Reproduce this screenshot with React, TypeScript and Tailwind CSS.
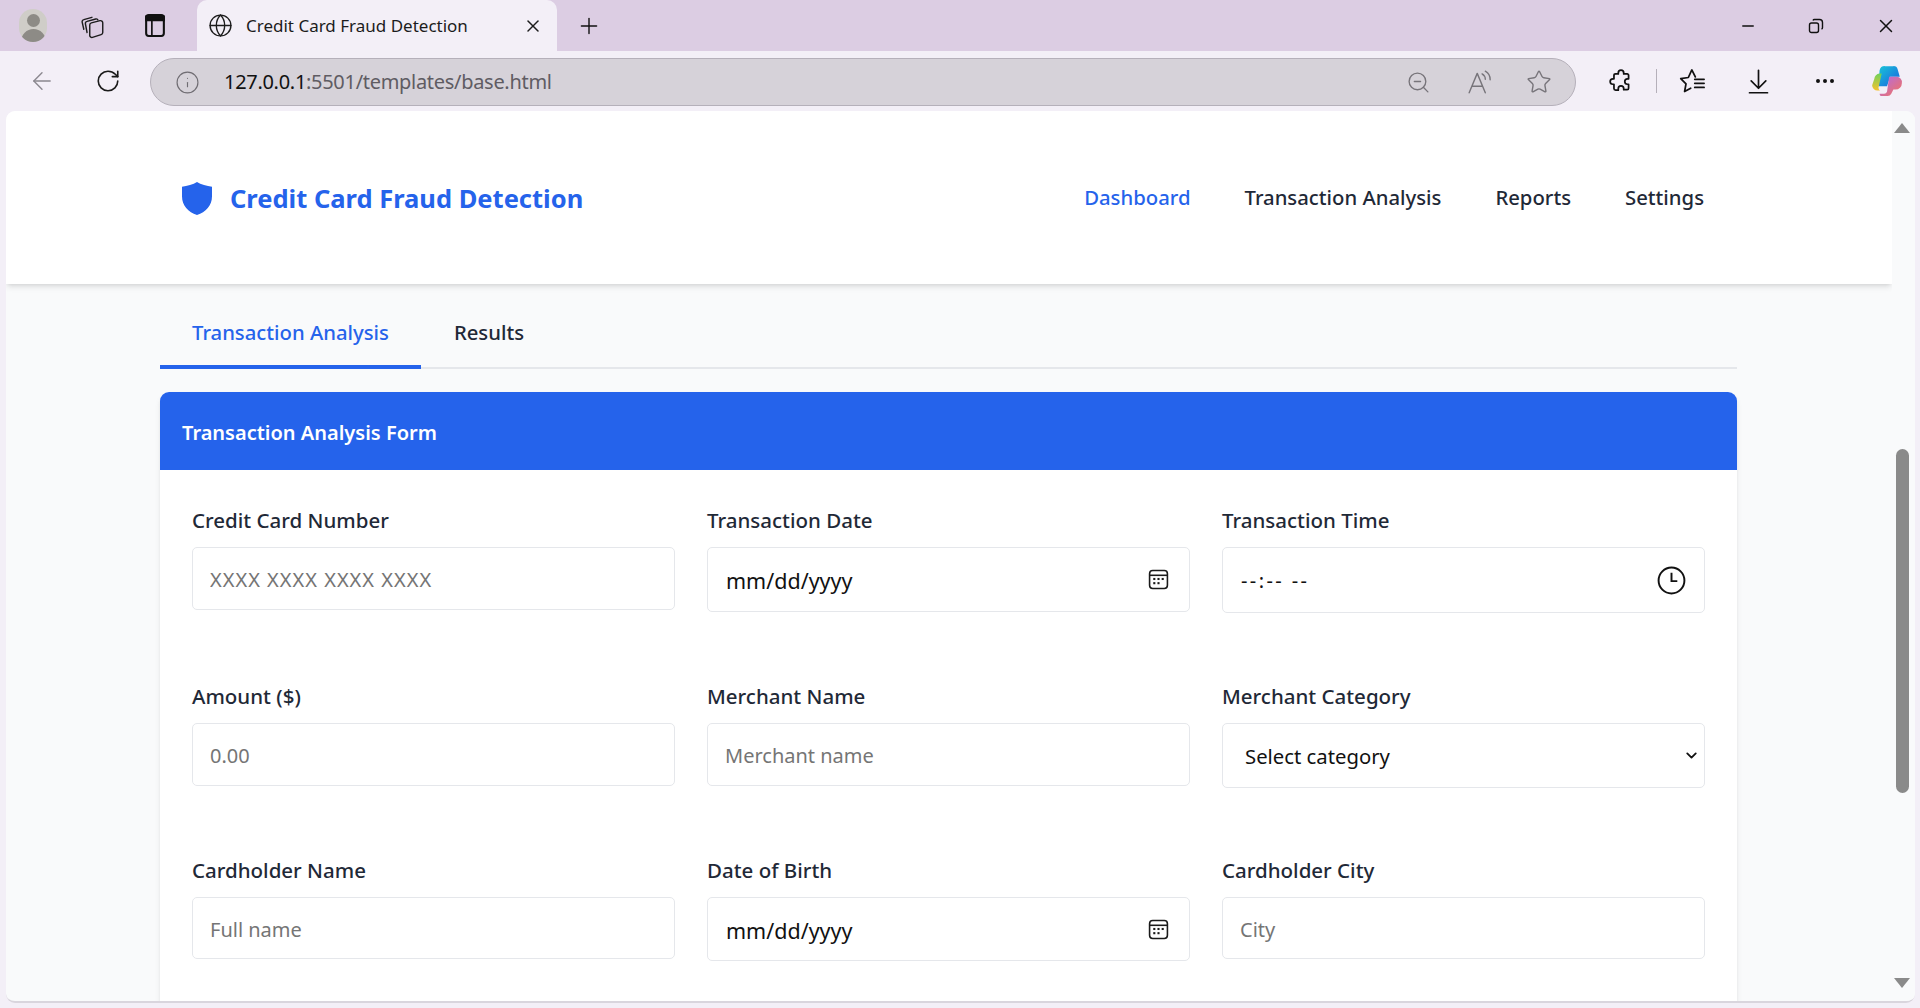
import React from 'react';
import { ArrowLeft, RotateCw, Info, ZoomOut, Star, MoreHorizontal, Globe, X, Plus, Minus, ChevronDown } from 'lucide-react';

const Shield = () => (
  <svg viewBox="0 0 24 28" preserveAspectRatio="none" className="w-[30px] h-[33px]" fill="#2563eb">
    <path d="M12 0 C15 2 20 3.6 24 4 V12 C24 20 19 25.5 12 28 C5 25.5 0 20 0 12 V4 C4 3.6 9 2 12 0 Z" />
  </svg>
);

const TabsIcon = () => (
  <svg viewBox="0 0 24 24" className="w-[26px] h-[26px]" fill="none" stroke="#1c1c1c" strokeWidth="1.3" strokeLinejoin="round" strokeLinecap="round">
    <path d="M3.500 15 L2 8.500 a2 2 0 0 1 1.500-2.400 L11 4" />
    <path d="M6.500 18 L5 10 a2 2 0 0 1 1.500-2.300 L14.500 5.500 a2 2 0 0 1 2 .8" />
    <path d="M9 21 V11 a2 2 0 0 1 1.500-1.900 l8-2 A2 2 0 0 1 21 9 v9 a2 2 0 0 1-1.500 1.900 l-8 2.600 A2 2 0 0 1 9 21z" />
  </svg>
);

const VerticalTabs = () => (
  <svg viewBox="0 0 20 24" className="w-[22px] h-[25px]" fill="none" stroke="#111" strokeWidth="2">
    <rect x="1.5" y="2" width="17" height="20" rx="2.5" />
    <path d="M1.5 3.5 h17 v3.5 h-17z" fill="#111" />
    <path d="M7 7 V22" strokeWidth="1.6" />
  </svg>
);

const ExtensionIcon = () => (
  <svg viewBox="0 0 24 24" className="w-[26px] h-[26px]" fill="none" stroke="#111" strokeWidth="1.6" strokeLinejoin="round">
    <path d="M9.5 5.5V4.5a2.5 2.5 0 0 1 5 0v1h3.2A1.3 1.3 0 0 1 19 6.800V10h-1a2.5 2.500 0 0 0 0 5h1v3.700A1.300 1.300 0 0 1 17.700 20H14.500v-1a2.500 2.500 0 0 0-5 0v1.500H7A1.500 1.500 0 0 1 5.500 19v-4h-1a2.500 2.500 0 0 1 0-5h1V7A1.500 1.500 0 0 1 7 5.500z" />
  </svg>
);

const FavoritesIcon = () => (
  <svg viewBox="0 0 24 24" className="w-[28px] h-[28px]" fill="none" stroke="#111" strokeWidth="1.5" strokeLinejoin="round" strokeLinecap="round">
    <path d="M14 8.500 L11 2.500 L8 9 L1.500 10 L6 14.500 L4.800 21 L10 18.200" />
    <path d="M13.500 10.500h8 M13.500 14h8 M13.500 17.500h8" />
  </svg>
);

const DownloadIcon = () => (
  <svg viewBox="0 0 24 24" className="w-[27px] h-[27px]" fill="none" stroke="#111" strokeWidth="1.5" strokeLinecap="round" strokeLinejoin="round">
    <path d="M12 2v16 M5.500 11.500 12 18l6.500-6.500 M4 22h16" />
  </svg>
);

const ReadAloudIcon = () => (
  <svg viewBox="0 0 26 24" className="w-[28px] h-[26px]" fill="none" stroke="#77747a" strokeWidth="1.3" strokeLinecap="round" strokeLinejoin="round">
    <path d="M2 22 L9.500 4 L17 22 M4.800 16h9.400" />
    <path d="M14 4.500 a6 6 0 0 1 3 5 M17 2 a9 9 0 0 1 4.500 8" />
  </svg>
);

const ClockIcon = () => (
  <svg viewBox="0 0 24 24" className="w-[31px] h-[31px]" fill="none" stroke="#111" strokeWidth="1.5">
    <circle cx="12" cy="12" r="10" />
    <path d="M12 6v6.500h4.500" />
  </svg>
);

const Copilot = () => (
  <svg viewBox="0 0 32 32" className="w-[34px] h-[34px]">
    <defs>
      <linearGradient id="cpA" x1="0" y1="0" x2="1" y2="1">
        <stop offset="0" stopColor="#19c5d8" />
        <stop offset="1" stopColor="#1a5fe0" />
      </linearGradient>
      <linearGradient id="cpB" x1="0" y1="0" x2="1" y2="1">
        <stop offset="0" stopColor="#b16be8" />
        <stop offset="1" stopColor="#f5735a" />
      </linearGradient>
      <linearGradient id="cpC" x1="0" y1="0" x2="0" y2="1">
        <stop offset="0" stopColor="#6fd15a" />
        <stop offset="1" stopColor="#f6c22e" />
      </linearGradient>
    </defs>
    <path d="M9 6 a5 5 0 0 1 5-4 h8 a4 4 0 0 1 4 3 l2 7 h-9 l-3 9 H8z" fill="url(#cpA)" />
    <path d="M4 14 a6 6 0 0 1 5-5 h2 l-3 13 a3 3 0 0 0 3 3 h3 l-2 0 H7 a5 5 0 0 1-5-5z" fill="url(#cpC)" />
    <path d="M18 12 h7 a5 5 0 0 1 5 6 a6 6 0 0 1-6 6 h-2 l-2 4 a4 4 0 0 1-4 2 h-6 a3 3 0 0 1-1-2 h4 a3 3 0 0 0 3-2z" fill="url(#cpB)" />
  </svg>
);

const CalendarIcon = () => (
  <svg viewBox="0 0 20 20" className="w-[21px] h-[21px]" fill="none" stroke="#1a1a1a" strokeWidth="1.5">
    <rect x="1.5" y="1.5" width="17" height="17" rx="3" />
    <path d="M1.5 6 h17" />
    <g fill="#1a1a1a" stroke="none">
      <rect x="5" y="8.5" width="2" height="2" />
      <rect x="9" y="8.5" width="2" height="2" />
      <rect x="13" y="8.5" width="2" height="2" />
      <rect x="5" y="12.5" width="2" height="2" />
      <rect x="9" y="12.5" width="2" height="2" />
    </g>
  </svg>
);

const labelClass = 'h-[41px] text-[20.5px] font-medium text-[#1f2937] leading-[28px]';
const fieldBox = 'w-full border border-[#e5e7eb] rounded-[5px] bg-white text-[#111]';

const TextField = ({ label, placeholder, h, wide }: { label: string; placeholder: string; h: string; wide?: boolean }) => (
  <div className="flex flex-col">
    <label className={labelClass}>{label}</label>
    <input
      placeholder={placeholder}
      className={`${fieldBox} ${h} ${wide ? 'tracking-[1px]' : ''} text-[20px] px-[17px] pt-[2px] placeholder:text-[#757575] outline-none`}
    />
  </div>
);

const DateField = ({ label, h }: { label: string; h: string }) => (
  <div className="flex flex-col">
    <label className={labelClass}>{label}</label>
    <div className={`${fieldBox} ${h} pl-[18px] pr-[20px] flex items-center justify-between`}>
      <span className="text-[21.5px] pt-[4px]">mm/dd/yyyy</span>
      <CalendarIcon />
    </div>
  </div>
);

export default function App() {
  return (
    <div className="h-screen w-full overflow-hidden flex flex-col bg-[#f3eff7] font-['Noto_Sans',sans-serif] text-[#111]">
      {/* tab strip */}
      <div className="h-[51px] shrink-0 bg-[#dccde3] flex items-center">
        <div className="w-[197px] shrink-0 flex items-center pl-[19px]">
          <div className="w-[28px] h-[33px] rounded-full bg-[#cfcdc8] flex flex-col items-center overflow-hidden">
            <div className="w-[13px] h-[13px] rounded-full bg-[#8d8b86] mt-[5px]" />
            <div className="w-[25px] h-[14px] rounded-t-full bg-[#8d8b86] mt-[2px]" />
          </div>
          <div className="ml-[33px]"><TabsIcon /></div>
          <div className="ml-[38px]"><VerticalTabs /></div>
        </div>
        <div className="w-[360px] shrink-0 h-[51px] bg-[#f3eff7] rounded-t-[10px] flex items-center pl-[11px] pr-[14px] text-[#1c1c1c]">
          <Globe size={25} strokeWidth={1.3} />
          <span className="ml-[13px] text-[17px] flex-1 whitespace-nowrap">Credit Card Fraud Detection</span>
          <X size={20} strokeWidth={1.8} />
        </div>
        <div className="ml-[19px]"><Plus size={26} strokeWidth={1.3} /></div>
        <div className="ml-auto flex items-center pr-[23px] gap-[51px]">
          <Minus size={18} strokeWidth={1.8} />
          <svg viewBox="0 0 16 16" className="w-[16px] h-[16px]" fill="none" stroke="#111" strokeWidth="1.4">
            <rect x="1.5" y="5" width="9" height="9.5" rx="2" />
            <path d="M5 2.5 a1.5 1.5 0 0 1 1.5-1 h5 a3 3 0 0 1 3 3 v5 a1.5 1.5 0 0 1-1 1.5" />
          </svg>
          <X size={22} strokeWidth={1.6} />
        </div>
      </div>

      {/* toolbar */}
      <div className="h-[60px] shrink-0 flex items-center">
        <div className="w-[150px] shrink-0 flex items-center pl-[28px] gap-[39px]">
          <ArrowLeft size={28} strokeWidth={1.2} className="text-[#8b888f]" />
          <RotateCw size={26} strokeWidth={1.5} className="text-[#1a1a1a]" />
        </div>
        <div className="w-[1426px] shrink-0 h-[48px] mt-[2px] rounded-full bg-[#d6d2d9] border border-[#b5b0ba] flex items-center pl-[24px] pr-[23px]">
          <Info size={25} strokeWidth={1.1} className="text-[#6f6c72]" />
          <span className="ml-[24px] text-[20px] tracking-[-0.3px]">
            <span className="text-[#111]">127.0.0.1</span>
            <span className="text-[#5f5c63]">:5501/templates/base.html</span>
          </span>
          <div className="ml-auto flex items-center">
            <ZoomOut size={25} strokeWidth={1.3} className="text-[#77747a]" />
            <div className="ml-[36px]"><ReadAloudIcon /></div>
            <Star size={26} strokeWidth={1.3} className="ml-[31px] text-[#77747a]" />
          </div>
        </div>
        <div className="flex-1 flex items-center pl-[32px] text-[#111]">
          <ExtensionIcon />
          <div className="w-px h-[24px] bg-[#b5b0ba] ml-[22px]" />
          <div className="ml-[22px]"><FavoritesIcon /></div>
          <div className="ml-[38px]"><DownloadIcon /></div>
          <MoreHorizontal size={24} strokeWidth={2} className="ml-[41px]" />
          <div className="ml-[33px]"><Copilot /></div>
        </div>
      </div>

      {/* page */}
      <div className="flex-1 min-h-0 ml-[6px] mr-[5px] mb-[5px] rounded-[9px] overflow-hidden bg-[#f9fafb] flex border-b-2 border-[#d9d5dd]">
        <div className="flex-1 min-w-0 flex flex-col overflow-hidden">
          <header className="h-[173px] shrink-0 bg-white shadow-md flex items-center justify-between pl-[176px] pr-[188px] relative">
            <div className="flex items-center gap-[18px] pt-[2px]">
              <Shield />
              <span className="text-[25.5px] font-bold text-[#2563eb]">Credit Card Fraud Detection</span>
            </div>
            <nav className="flex items-center gap-[54px] text-[20.3px] font-medium text-[#1f2937]">
              <span className="text-[#2563eb]">Dashboard</span>
              <span>Transaction Analysis</span>
              <span>Reports</span>
              <span>Settings</span>
            </nav>
          </header>

          <div className="pl-[154px] pr-[155px]">
            <div className="h-[85px] flex items-end border-b-2 border-[#e5e7eb]">
              <div className="h-[85px] -mb-[2px] px-[32px] pt-[15px] border-b-4 border-[#2563eb] flex items-center text-[20.3px] font-medium text-[#2563eb]">Transaction Analysis</div>
              <div className="h-[85px] px-[33px] pt-[15px] flex items-center text-[20.3px] font-medium text-[#1f2937]">Results</div>
            </div>

            <div className="mt-[23px] rounded-t-[9px] bg-white shadow-md">
              <div className="h-[78px] rounded-t-[9px] bg-[#2563eb] flex items-center pl-[22px] pt-[3px] text-[20px] font-semibold text-white">
                Transaction Analysis Form
              </div>
              <div className="grid grid-cols-3 gap-x-[32px] px-[32px] pt-[36px] pb-[200px]">
                <div className="h-[176px]"><TextField label="Credit Card Number" placeholder="XXXX XXXX XXXX XXXX" h="h-[63px]" wide /></div>
                <div className="h-[176px]"><DateField label="Transaction Date" h="h-[65px]" /></div>
                <div className="h-[176px]">
                  <div className="flex flex-col">
                    <label className={labelClass}>Transaction Time</label>
                    <div className={`${fieldBox} h-[66px] pl-[18px] pr-[17px] flex items-center justify-between`}>
                      <span className="text-[20px] tracking-[2.4px] pt-[2px] whitespace-pre">--:-- --</span>
                      <ClockIcon />
                    </div>
                  </div>
                </div>

                <div className="h-[174px]"><TextField label="Amount ($)" placeholder="0.00" h="h-[63px]" /></div>
                <div className="h-[174px]"><TextField label="Merchant Name" placeholder="Merchant name" h="h-[63px]" /></div>
                <div className="h-[174px]">
                  <div className="flex flex-col">
                    <label className={labelClass}>Merchant Category</label>
                    <div className={`${fieldBox} h-[65px] pl-[22px] pr-[4px] flex items-center justify-between`}>
                      <span className="text-[20.3px] pt-[2px]">Select category</span>
                      <ChevronDown size={17} strokeWidth={2.6} />
                    </div>
                  </div>
                </div>

                <div><TextField label="Cardholder Name" placeholder="Full name" h="h-[62px]" /></div>
                <div><DateField label="Date of Birth" h="h-[64px]" /></div>
                <div><TextField label="Cardholder City" placeholder="City" h="h-[62px]" /></div>
              </div>
            </div>
          </div>
        </div>

        {/* scrollbar */}
        <div className="w-[23px] shrink-0 bg-[#f9fafb] flex flex-col items-center pr-[3px]">
          <div className="mt-[12px] w-0 h-0 border-x-[8px] border-x-transparent border-b-[10px] border-b-[#8a8a8a]" />
          <div className="mt-[316px] w-[13px] h-[344px] rounded-full bg-[#8a8a8a]" />
          <div className="mt-auto mb-[13px] w-0 h-0 border-x-[8px] border-x-transparent border-t-[10px] border-t-[#8a8a8a]" />
        </div>
      </div>
    </div>
  );
}
